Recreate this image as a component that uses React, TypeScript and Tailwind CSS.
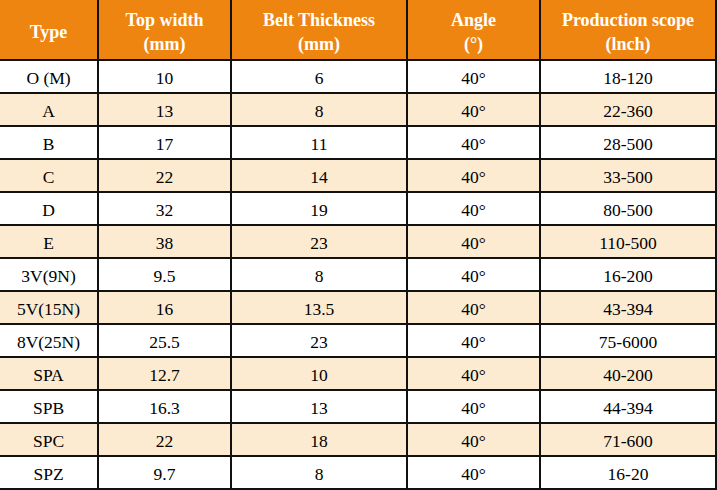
const headers = [
  ["Type"],
  ["Top width", "(mm)"],
  ["Belt Thickness", "(mm)"],
  ["Angle", "(°)"],
  ["Production scope", "(lnch)"],
];

const rows = [
  ["O (M)", "10", "6", "40°", "18-120"],
  ["A", "13", "8", "40°", "22-360"],
  ["B", "17", "11", "40°", "28-500"],
  ["C", "22", "14", "40°", "33-500"],
  ["D", "32", "19", "40°", "80-500"],
  ["E", "38", "23", "40°", "110-500"],
  ["3V(9N)", "9.5", "8", "40°", "16-200"],
  ["5V(15N)", "16", "13.5", "40°", "43-394"],
  ["8V(25N)", "25.5", "23", "40°", "75-6000"],
  ["SPA", "12.7", "10", "40°", "40-200"],
  ["SPB", "16.3", "13", "40°", "44-394"],
  ["SPC", "22", "18", "40°", "71-600"],
  ["SPZ", "9.7", "8", "40°", "16-20"],
];

export default function App() {
  return (
    <div className="h-[490px] w-[717px] overflow-hidden bg-white [font-family:'Liberation_Serif',serif]">
      <table className="w-[717px] table-fixed border-separate border-spacing-0">
        <colgroup>
          <col className="w-[99px]" />
          <col className="w-[133px]" />
          <col className="w-[176px]" />
          <col className="w-[133px]" />
          <col className="w-[176px]" />
        </colgroup>
        <thead>
          <tr className="h-[61px] bg-[#ee8511]">
            {headers.map((h, i) => (
              <th
                key={i}
                className="border-b-2 border-r-2 border-[#111] p-0 pt-[5px] text-center align-middle text-[18px] font-bold leading-[24px] text-white"
              >
                {h.map((line) => (
                  <div key={line}>{line}</div>
                ))}
              </th>
            ))}
          </tr>
        </thead>
        <tbody>
          {rows.map((row, r) => (
            <tr key={r} className={`h-[33px] ${r % 2 === 1 ? "bg-[#fdebd1]" : "bg-white"}`}>
              {row.map((cell, c) => (
                <td
                  key={c}
                  className="border-b-2 border-r-2 border-[#111] p-0 pt-[4px] text-center align-middle text-[17.5px] leading-none text-black"
                >
                  {cell}
                </td>
              ))}
            </tr>
          ))}
        </tbody>
      </table>
    </div>
  );
}
